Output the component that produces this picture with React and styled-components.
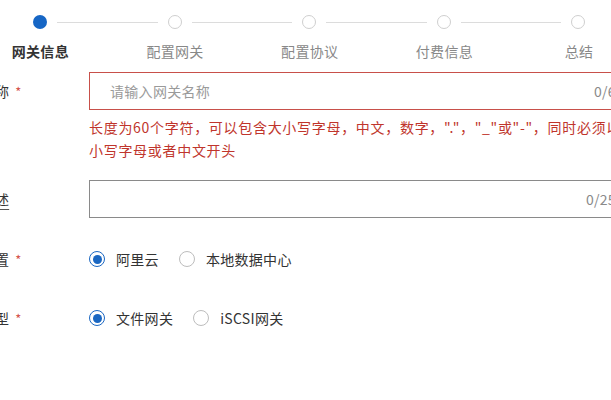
import React from "react";
import styled, { createGlobalStyle } from "styled-components";

const GlobalStyle = createGlobalStyle`
  html, body {
    margin: 0;
    padding: 0;
    background: #fff;
  }
  body {
    font-family: "Noto Sans CJK SC", "Noto Sans", sans-serif;
    font-size: 14px;
    color: #333;
    letter-spacing: 0.3px;
  }
`;

const Page = styled.div`
  width: 611px;
  height: 400px;
  overflow: hidden;
  background: #fff;
`;

const StepTrack = styled.div`
  display: flex;
  align-items: center;
  width: 552px;
  margin: 15px 0 0 33px;
  height: 14px;
`;

const Dot = styled.span`
  flex: none;
  box-sizing: border-box;
  width: 14px;
  height: 14px;
  border-radius: 50%;
  background: ${(p) => (p.$active ? "#1666c5" : "#fff")};
  border: ${(p) => (p.$active ? "none" : "1.5px solid #cfcfcf")};
`;

const Line = styled.span`
  flex: 1;
  height: 1px;
  margin: 0 10px;
  background: #dcdcdc;
`;

const StepLabels = styled.div`
  display: grid;
  grid-template-columns: repeat(5, 134.7px);
  margin: 12px 0 0 -27px;
`;

const StepLabel = styled.div`
  text-align: center;
  font-size: 14px;
  line-height: 20px;
  font-weight: ${(p) => (p.$active ? 700 : 400)};
  color: ${(p) => (p.$active ? "#333" : "#888")};
`;

const Form = styled.div`
  margin: 11px 0 0 -48px;
  display: flex;
  flex-direction: column;
`;

const Row = styled.div`
  display: grid;
  grid-template-columns: 137px 1fr;
  align-items: start;
  margin-top: ${(p) => p.$top || 0}px;
`;

const Label = styled.div`
  height: 38px;
  display: flex;
  align-items: center;
  color: #333;
  font-size: 14px;
`;

const LabelText = styled.span`
  text-decoration: ${(p) => (p.$help ? "underline" : "none")};
  text-underline-offset: 4px;
  text-decoration-color: #555;
`;

const Required = styled.span`
  color: #d5554c;
  margin-left: 6px;
  font-size: 13px;
`;

const Field = styled.div`
  display: flex;
  flex-direction: column;
`;

const InputBox = styled.div`
  box-sizing: border-box;
  width: 548px;
  height: 38px;
  display: flex;
  align-items: center;
  justify-content: space-between;
  padding: 0 12px 0 20px;
  border: 1px solid ${(p) => (p.$error ? "#c8504a" : "#8a8a8a")};
  background: #fff;
`;

const Placeholder = styled.span`
  color: #9a9a9a;
  font-size: 14px;
`;

const Counter = styled.span`
  color: #8a8a8a;
  font-size: 14px;
`;

const ErrorText = styled.div`
  margin-top: 6px;
  width: 560px;
  color: #c0352c;
  font-size: 14px;
  line-height: 23px;
  letter-spacing: 0.7px;
  white-space: nowrap;
`;

const RadioGroup = styled.div`
  height: 38px;
  display: flex;
  align-items: center;
  gap: 20px;
`;

const RadioItem = styled.label`
  display: flex;
  align-items: center;
  gap: 11px;
  color: #333;
  font-size: 14px;
`;

const RadioMark = styled.span`
  box-sizing: border-box;
  width: 16px;
  height: 16px;
  border-radius: 50%;
  border: ${(p) => (p.$checked ? "1.5px solid #1a67c2" : "1px solid #bdbdbd")};
  display: flex;
  align-items: center;
  justify-content: center;
  background: #fff;
  &::after {
    content: "";
    width: 9px;
    height: 9px;
    border-radius: 50%;
    background: ${(p) => (p.$checked ? "#1a67c2" : "transparent")};
  }
`;

const steps = ["网关信息", "配置网关", "配置协议", "付费信息", "总结"];

const Radio = ({ checked, children }) => (
  <RadioItem>
    <RadioMark $checked={checked} />
    {children}
  </RadioItem>
);

export default function App() {
  return (
    <Page>
      <GlobalStyle />
      <StepTrack>
        {steps.map((s, i) => (
          <React.Fragment key={s}>
            <Dot $active={i === 0} />
            {i < steps.length - 1 && <Line />}
          </React.Fragment>
        ))}
      </StepTrack>
      <StepLabels>
        {steps.map((s, i) => (
          <StepLabel key={s} $active={i === 0}>
            {s}
          </StepLabel>
        ))}
      </StepLabels>

      <Form>
        <Row>
          <Label>
            <LabelText>网关名称</LabelText>
            <Required>*</Required>
          </Label>
          <Field>
            <InputBox $error>
              <Placeholder>请输入网关名称</Placeholder>
              <Counter>0/60</Counter>
            </InputBox>
            <ErrorText>
              长度为60个字符，可以包含大小写字母，中文，数字，"."，"_"或"-"，同时必须以
              <br />
              小写字母或者中文开头
            </ErrorText>
          </Field>
        </Row>

        <Row $top={18}>
          <Label>
            <LabelText $help>网关描述</LabelText>
          </Label>
          <InputBox>
            <Placeholder />
            <Counter>0/255</Counter>
          </InputBox>
        </Row>

        <Row $top={22}>
          <Label>
            <LabelText>网关位置</LabelText>
            <Required>*</Required>
          </Label>
          <RadioGroup>
            <Radio checked>阿里云</Radio>
            <Radio>本地数据中心</Radio>
          </RadioGroup>
        </Row>

        <Row $top={21}>
          <Label>
            <LabelText>网关类型</LabelText>
            <Required>*</Required>
          </Label>
          <RadioGroup>
            <Radio checked>文件网关</Radio>
            <Radio>iSCSI网关</Radio>
          </RadioGroup>
        </Row>
      </Form>
    </Page>
  );
}
